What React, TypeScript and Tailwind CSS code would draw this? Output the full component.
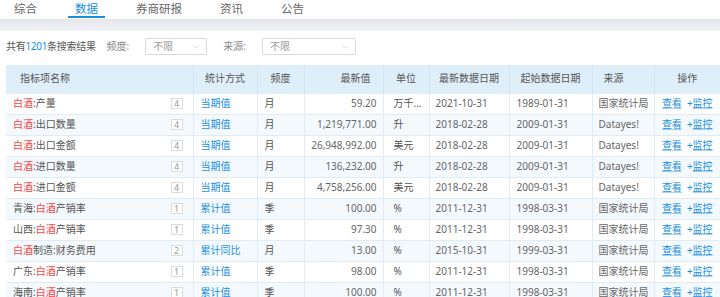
import { ChevronDown } from "lucide-react"

type Row = {
  pre?: string
  red: string
  post: string
  n: number
  way: string
  freq: string
  value: string
  unit: string
  latest: string
  start: string
  src: string
}

const rows: Row[] = [
  { red: "白酒", post: ":产量", n: 4, way: "当期值", freq: "月", value: "59.20", unit: "万千...", latest: "2021-10-31", start: "1989-01-31", src: "国家统计局" },
  { red: "白酒", post: ":出口数量", n: 4, way: "当期值", freq: "月", value: "1,219,771.00", unit: "升", latest: "2018-02-28", start: "2009-01-31", src: "Datayes!" },
  { red: "白酒", post: ":出口金额", n: 4, way: "当期值", freq: "月", value: "26,948,992.00", unit: "美元", latest: "2018-02-28", start: "2009-01-31", src: "Datayes!" },
  { red: "白酒", post: ":进口数量", n: 4, way: "当期值", freq: "月", value: "136,232.00", unit: "升", latest: "2018-02-28", start: "2009-01-31", src: "Datayes!" },
  { red: "白酒", post: ":进口金额", n: 4, way: "当期值", freq: "月", value: "4,758,256.00", unit: "美元", latest: "2018-02-28", start: "2009-01-31", src: "Datayes!" },
  { pre: "青海:", red: "白酒", post: "产销率", n: 1, way: "累计值", freq: "季", value: "100.00", unit: "%", latest: "2011-12-31", start: "1998-03-31", src: "国家统计局" },
  { pre: "山西:", red: "白酒", post: "产销率", n: 1, way: "累计值", freq: "季", value: "97.30", unit: "%", latest: "2011-12-31", start: "1998-03-31", src: "国家统计局" },
  { red: "白酒", post: "制造:财务费用", n: 2, way: "累计同比", freq: "月", value: "13.00", unit: "%", latest: "2015-10-31", start: "1999-03-31", src: "国家统计局" },
  { pre: "广东:", red: "白酒", post: "产销率", n: 1, way: "累计值", freq: "季", value: "98.00", unit: "%", latest: "2011-12-31", start: "1998-03-31", src: "国家统计局" },
  { pre: "海南:", red: "白酒", post: "产销率", n: 1, way: "累计值", freq: "季", value: "100.00", unit: "%", latest: "2011-12-31", start: "1998-03-31", src: "国家统计局" },
]

const tabs = ["综合", "数据", "券商研报", "资讯", "公告"]

function Select({ width }: { width: string }) {
  return (
    <div className={`${width} h-[17px] border border-[#d9d9d9] rounded-[2px] bg-white flex items-center justify-between pl-[7px] pr-[5px] text-[#999]`}>
      <span>不限</span>
      <ChevronDown className="w-[10px] h-[10px] text-[#c3c3c3]" strokeWidth={1.5} />
    </div>
  )
}

export default function App() {
  return (
    <div
      className="w-[720px] h-[297px] overflow-hidden bg-white text-[10px] text-[#555]"
      style={{ fontFamily: '"Noto Sans", "Noto Sans CJK SC", sans-serif' }}
    >
      <div className="h-[19px] flex gap-[24px] pl-[7px] bg-white">
        {tabs.map((t, i) => (
          <div
            key={t}
            className={
              i === 1
                ? "h-[18px] px-[7px] pt-[1px] leading-[15px] text-[11.5px] text-[#1a8fe0] border-b-2 border-[#1a8fe0]"
                : "h-[18px] px-[7px] pt-[1px] leading-[15px] text-[11.5px] text-[#666] border-b-2 border-transparent"
            }
          >
            {t}
          </div>
        ))}
      </div>
      <div className="h-[11px] bg-gradient-to-b from-[#e6e6e8] to-[#eff2f8] border-b border-[#e3e8f2]" />

      <div className="flex items-center pt-[8px] pb-[10px] pl-[6px]">
        <span className="tracking-[-0.3px]">
          共有<span className="text-[#1a8fe0]">1201</span>条搜索结果
        </span>
        <span className="ml-[11px] mr-[16px] text-[#888]">频度:</span>
        <Select width="w-[62px]" />
        <span className="ml-[16px] mr-[16px] text-[#888]">来源:</span>
        <Select width="w-[94px]" />
      </div>

      <table className="ml-[6px] table-fixed border-collapse w-[714px]">
        <colgroup>
          <col className="w-[187px]" />
          <col className="w-[64px]" />
          <col className="w-[47px]" />
          <col className="w-[79px]" />
          <col className="w-[46px]" />
          <col className="w-[80px]" />
          <col className="w-[83px]" />
          <col className="w-[62px]" />
          <col className="w-[66px]" />
        </colgroup>
        <thead>
          <tr className="h-[28px] bg-[#dfeffa] text-[#555] font-normal">
            <th className="font-normal text-left pl-[14px] border-r border-[#d3e5f3]">指标项名称</th>
            <th className="font-normal text-center border-r border-[#d3e5f3]">统计方式</th>
            <th className="font-normal text-center border-r border-[#d3e5f3]">频度</th>
            <th className="font-normal text-right pr-[12px] border-r border-[#d3e5f3]">最新值</th>
            <th className="font-normal text-center border-r border-[#d3e5f3]">单位</th>
            <th className="font-normal text-center border-r border-[#d3e5f3]">最新数据日期</th>
            <th className="font-normal text-center border-r border-[#d3e5f3]">起始数据日期</th>
            <th className="font-normal text-left pl-[11px] border-r border-[#d3e5f3]">来源</th>
            <th className="font-normal text-center">操作</th>
          </tr>
        </thead>
        <tbody>
          {rows.map((r, i) => (
            <tr key={i} className={i % 2 === 1 ? "h-[21px] bg-[#f4f9fd]" : "h-[21px] bg-white"}>
              <td className="border border-l-0 border-[#e1ebf4] pl-[7px] pr-[10px] whitespace-nowrap">
                <div className="flex items-center justify-between">
                  <span>
                    {r.pre}
                    <span className="text-[#f5474a]">{r.red}</span>
                    {r.post}
                  </span>
                  <span className="w-[12px] h-[11px] border border-[#dcdcdc] bg-white text-[#999] text-[9px] leading-[9px] flex items-center justify-center">
                    {r.n}
                  </span>
                </div>
              </td>
              <td className="border border-[#e1ebf4] pl-[7px] text-[#1a8fe0] whitespace-nowrap">{r.way}</td>
              <td className="border border-[#e1ebf4] pl-[7px]">{r.freq}</td>
              <td className="border border-[#e1ebf4] pr-[6px] text-right text-[#666]">{r.value}</td>
              <td className="border border-[#e1ebf4] pl-[10px] whitespace-nowrap">{r.unit}</td>
              <td className="border border-[#e1ebf4] pl-[6px] text-[#666]">{r.latest}</td>
              <td className="border border-[#e1ebf4] pl-[7px] text-[#666]">{r.start}</td>
              <td className="border border-[#e1ebf4] pl-[6px] text-[#666] whitespace-nowrap">{r.src}</td>
              <td className="border border-r-0 border-[#e1ebf4] text-center text-[#1a8fe0] whitespace-nowrap">
                <span className="underline decoration-[#1a8fe0]/40">查看</span>
                <span className="ml-[5px]">+</span>
                <span className="underline decoration-[#1a8fe0]/40">监控</span>
              </td>
            </tr>
          ))}
        </tbody>
      </table>
    </div>
  )
}
